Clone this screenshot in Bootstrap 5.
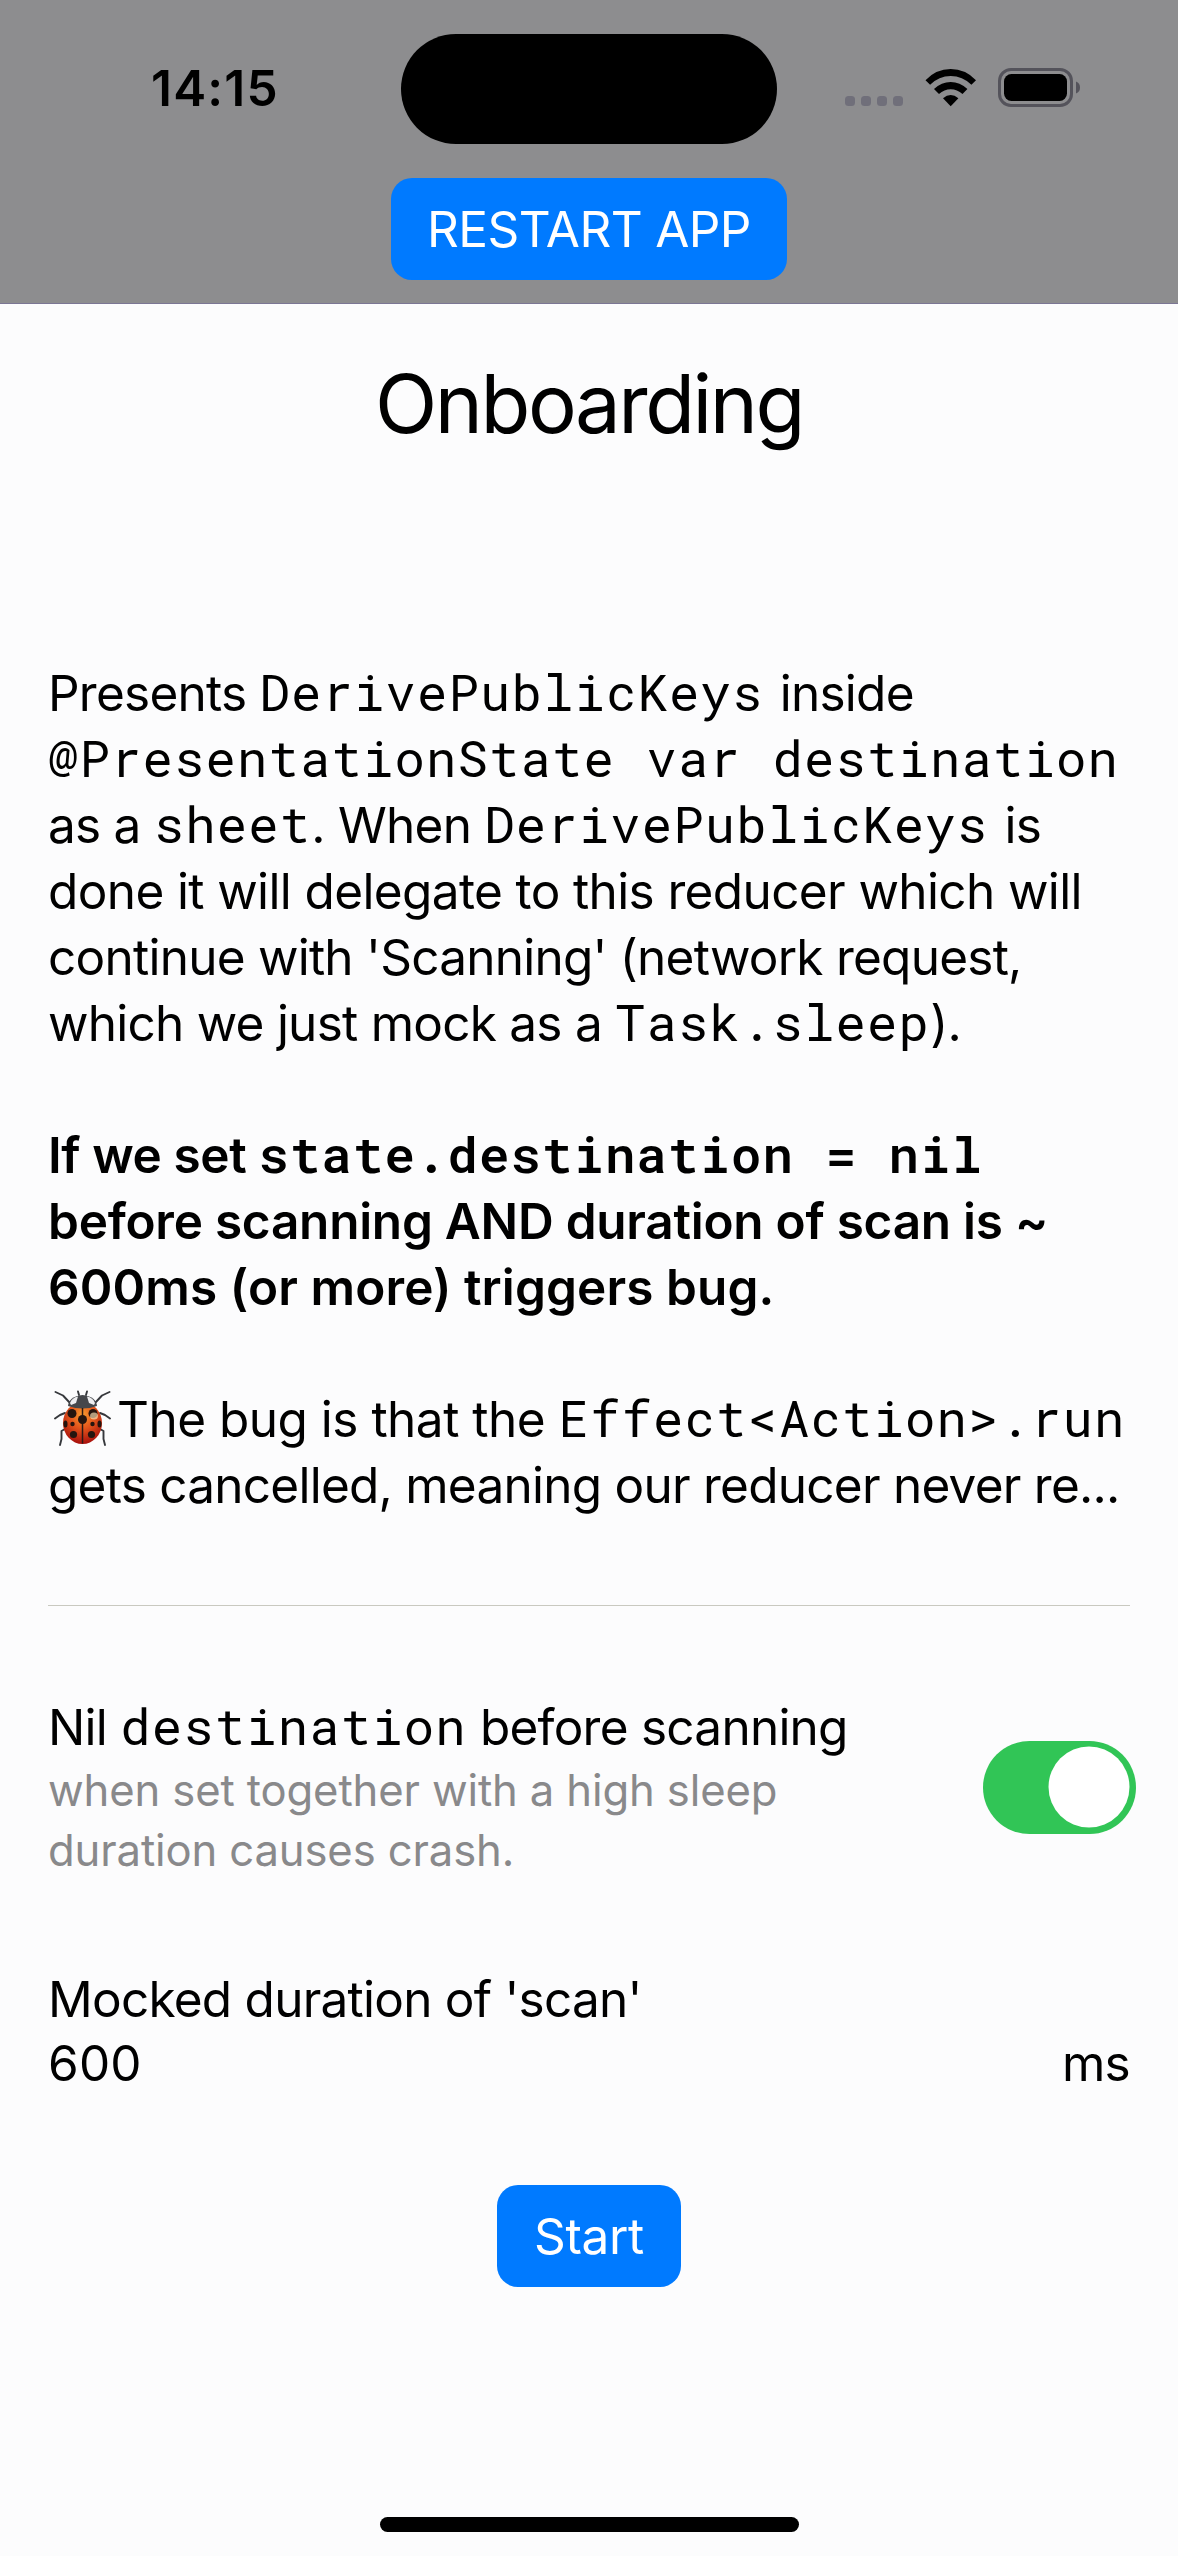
<!DOCTYPE html>
<html lang="en">
<head>
<meta charset="utf-8">
<meta name="viewport" content="width=device-width, initial-scale=1">
<title>Onboarding</title>
<link href="https://cdn.jsdelivr.net/npm/bootstrap@5.3.0/dist/css/bootstrap.min.css" rel="stylesheet">
<script src="https://cdn.jsdelivr.net/npm/bootstrap@5.3.0/dist/js/bootstrap.bundle.min.js"></script>
<style>
  body { background: #fcfcfd; color: #000; font-family: Inter, sans-serif; font-size: 49.5px; line-height: 66px; letter-spacing: -.75px; }
  .screen { width: 1178px; height: 2556px; }
  .backdrop { height: 304px; background: #8d8d8f; border-bottom: 1px solid #7b7694; }
  .status-bar { height: 178px; padding-top: 34px; }
  .status-side { width: 401px; height: 110px; }
  .clock { padding-left: 151px; padding-top: 19px; font-weight: 600; letter-spacing: 1.2px; line-height: 70px; font-size: 49.5px; }
  .island { width: 376px; height: 110px; background: #000; }
  .btn-ios { --bs-btn-bg: #007aff; --bs-btn-color: #fff; --bs-btn-border-width: 0; --bs-btn-border-radius: 21px;
    --bs-btn-font-family: Inter, sans-serif; --bs-btn-font-size: 49.5px; --bs-btn-line-height: 66px;
    --bs-btn-padding-x: 36px; --bs-btn-padding-y: 18px; height: 102px; }
  .btn-restart { width: 396px; letter-spacing: -.6px; }
  .btn-start { width: 184px; margin-top: 89px; letter-spacing: -.35px; }
  .screen-title { font-size: 81.5px; line-height: 102px; letter-spacing: -2.5px; margin: 49px 0 205px; font-weight: 400; }
  .sheet { padding: 0 48px; }
  .para p { margin: 0 0 66px; white-space: nowrap; }
  .para p:last-child { margin-bottom: 0; }
  .line { display: block; height: 66px; }
  .line-wide { letter-spacing: -.62px; }
  .code { font-family: "Roboto Mono", "Liberation Mono", monospace; font-size: 50.6px; line-height: 1px; letter-spacing: 1.14px; }
  .strong { font-weight: 600; }
  .code-gap { margin-right: 3px; }
  .beetle { width: 57px; height: 57px; margin: -10px 6px 0 6px; vertical-align: -10px; }
  .rule { height: 1px; background: #c9c9c0; margin: 87px 0 88px; }
  .option-title { height: 67px; white-space: nowrap; }
  .option-note { color: #89898b; font-size: 43.6px; line-height: 60px; letter-spacing: -.12px; white-space: nowrap; }
  .switch-ios.form-check-input { width: 153px; height: 93px; margin: 0 -6px 0 0; border: 0; border-radius: 47px; flex: none; }
  .switch-ios.form-check-input:checked { background-color: #31c556; background-size: 108px 108px; background-position: 52px -8px; }
  .field-title { height: 64px; margin-top: 85px; }
  .home-bar { width: 419px; height: 15px; background: #000; margin-bottom: 24px; }
</style>
</head>
<body>
<main class="screen d-flex flex-column overflow-hidden">
  <header class="backdrop flex-shrink-0">
    <div class="status-bar d-flex">
      <div class="status-side clock">14:15</div>
      <div class="island rounded-pill"></div>
      <div class="status-side d-flex">
        <svg width="401" height="110" viewBox="777 34 401 110" aria-hidden="true">
          <g fill="#706f7a"><rect x="845" y="96" width="10" height="10" rx="3.5"/><rect x="861" y="96" width="10" height="10" rx="3.5"/><rect x="877" y="96" width="10" height="10" rx="3.5"/><rect x="893" y="96" width="10" height="10" rx="3.5"/></g>
          <path fill="#000" d="M925.5 80.2Q936 69 950.7 69T976 80.2L971.4 84.8Q962.5 76 950.7 76T930.1 84.8Z"/>
          <path fill="#000" d="M934 89Q941.5 82 950.7 82T967.4 89L962.5 94Q957.2 89.2 950.7 89.2T939 94Z"/>
          <path fill="#000" d="M943 98.3Q950.7 91.5 958.4 98.3L950.7 106.2Z"/>
          <rect x="999.5" y="69.5" width="72" height="36" rx="11.5" fill="none" stroke="#54535b" stroke-width="3"/>
          <rect x="1004" y="74" width="63" height="27" rx="7.5" fill="#000"/>
          <path fill="#54535b" d="M1076 81.5Q1080 83 1080 87.5T1076 93.5Z"/>
        </svg>
      </div>
    </div>
    <div class="d-flex justify-content-center"><button type="button" class="btn btn-primary btn-ios btn-restart px-0">RESTART APP</button></div>
  </header>

  <section class="sheet flex-grow-1 d-flex flex-column">
    <h1 class="screen-title text-center">Onboarding</h1>
    <div class="para">
      <p><span class="line">Presents <span class="code code-gap">DerivePublicKeys</span> inside</span><span class="line"><span class="code">@PresentationState var destination</span></span><span class="line">as a <span class="code">sheet</span>. When <span class="code code-gap">DerivePublicKeys</span> is</span><span class="line line-wide">done it will delegate to this reducer which will</span><span class="line">continue with 'Scanning' (network request,</span><span class="line">which we just mock as a <span class="code">Task.sleep</span>).</span></p>
      <p class="strong"><span class="line" style="letter-spacing:-.4px">If we set <span class="code">state.destination = nil</span></span><span class="line" style="letter-spacing:-.25px">before scanning AND duration of scan is ~</span><span class="line" style="letter-spacing:.1px">600ms (or more) triggers bug.</span></p>
      <p><span class="line" style="letter-spacing:-.5px"><svg class="beetle" viewBox="0 0 57 57" role="img" aria-label="Lady beetle"><defs><radialGradient id="shell" cx=".5" cy=".3" r=".7"><stop offset="0" stop-color="#f79a2e"/><stop offset=".45" stop-color="#e4571c"/><stop offset="1" stop-color="#a80f0c"/></radialGradient></defs>
        <g fill="none" stroke="#36383c" stroke-width="1.9" stroke-linecap="round" stroke-linejoin="round"><path d="M16 13 9 5.5 1.5 2M41 13 48 5.5 55.5 2M11 23 6 25 1 28.5M46 23 51 25 56 28.5M11 39 7.5 41V49L6 55M46 39 49.5 41V49L51 55M25 5 24 1.5M32 5 33 1.5"/></g>
        <ellipse cx="28.5" cy="33" rx="19.5" ry="21" fill="url(#shell)"/>
        <path d="M14 16Q15 6.5 28.5 5 42 6.5 43 16 28.5 21 14 16Z" fill="#45474b"/>
        <path d="M16 13Q18 7.5 24 6.5L22 13 17 15ZM41 13Q39 7.5 33 6.5L35 13 40 15Z" fill="#eeeef0"/>
        <path d="M28.5 18V53.5" stroke="#2b1a16" stroke-width="1.5"/>
        <g fill="#25150f"><circle cx="18" cy="23.5" r="4.5"/><circle cx="39" cy="23.5" r="4.5"/><circle cx="28.5" cy="29.5" r="4.5"/><circle cx="18.5" cy="34" r="2.2"/><circle cx="38.5" cy="34" r="2.2"/><ellipse cx="11.5" cy="34" rx="2" ry="3.5"/><ellipse cx="45.5" cy="34" rx="2" ry="3.5"/><circle cx="19.5" cy="44.5" r="3.6"/><circle cx="37.5" cy="44.5" r="3.6"/></g>
        <ellipse cx="40" cy="26" rx="4" ry="3.5" fill="#ffe6b8" opacity=".65"/></svg>The bug is that the <span class="code">Effect&lt;Action&gt;.run</span></span><span class="line">gets cancelled, meaning our reducer never re...</span></p>
    </div>
    <div class="rule flex-shrink-0"></div>
    <div class="d-flex justify-content-between align-items-center">
      <label for="nilSwitch">
        <span class="option-title d-block">Nil <span class="code">destination</span> before scanning</span>
        <span class="option-note d-block">when set together with a high sleep<br>duration causes crash.</span>
      </label>
      <div class="form-switch p-0 d-flex"><input class="form-check-input switch-ios" type="checkbox" role="switch" id="nilSwitch" checked></div>
    </div>
    <div class="field-title">Mocked duration of 'scan'</div>
    <div class="d-flex justify-content-between"><span style="letter-spacing:.2px">600</span><span>ms</span></div>
    <button type="button" class="btn btn-primary btn-ios btn-start align-self-center px-0">Start</button>
    <div class="home-bar rounded-pill mt-auto align-self-center"></div>
  </section>
</main>
</body>
</html>
